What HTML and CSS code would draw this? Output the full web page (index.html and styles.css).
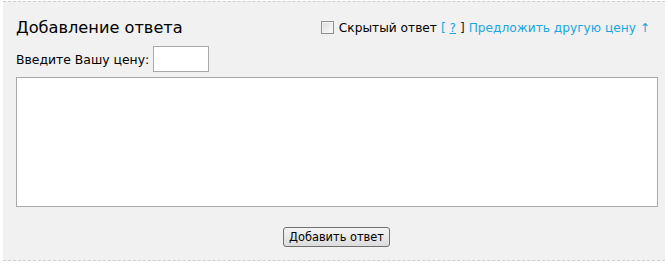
FILE: index.html
```html
<!DOCTYPE html>
<html lang="ru">
<head>
    <meta charset="UTF-8">
    <title>Добавление ответа</title>
    <link rel="stylesheet" href="styles.css">
</head>
<body>
    <div class="answer-box">
        <div class="answer-head">
            <h2>Добавление ответа</h2>
            <div class="answer-options">
                <label class="hidden-answer"><input type="checkbox"> Скрытый ответ</label>
                <span class="hint"><span class="bracket">[</span> <a href="#">?</a> ]</span>
                <a href="#" class="other-price">Предложить другую цену ↑</a>
            </div>
        </div>
        <div class="price-row">
            <label for="price">Введите Вашу цену:</label>
            <input type="text" id="price" class="price-input">
        </div>
        <textarea class="answer-text"></textarea>
        <div class="submit-row">
            <button class="submit-button">Добавить ответ</button>
        </div>
    </div>
</body>
</html>
```

FILE: styles.css
```css
body {
    margin: 0;
    padding: 0;
    background-color: #fff;
    font-family: "DejaVu Sans", Verdana, sans-serif;
    font-size: 12.4px;
    color: #000;
}

.answer-box {
    margin: 1px 0 0 3px;
    height: 260px;
    box-sizing: border-box;
    background-color: #f1f1f1;
    border-top: 1px dashed #cfcfcf;
    border-bottom: 1px dashed #cfcfcf;
    padding: 0 8px 0 13px;
}

.answer-head {
    display: flex;
    justify-content: space-between;
    align-items: center;
    height: 40px;
    padding-top: 11px;
    box-sizing: border-box;
}

.answer-head h2 {
    margin: 0;
    font-size: 16.2px;
    font-weight: normal;
}

.answer-options {
    display: flex;
    align-items: center;
    gap: 4px;
    padding-right: 7px;
    font-size: 12.2px;
}

.hidden-answer {
    display: flex;
    align-items: center;
    gap: 5px;
}

.hidden-answer input {
    appearance: none;
    margin: 0;
    width: 13px;
    height: 13px;
    box-sizing: border-box;
    border: 1px solid #8e8f8f;
    background: linear-gradient(135deg, #dcdcdc, #fbfbfb);
    box-shadow: inset 0 0 0 1px #f4f4f4;
}

.hint {
    color: #222;
}

.hint .bracket,
.hint a {
    color: #1aa6de;
}

.other-price {
    color: #1aa6de;
    text-decoration: none;
}

.price-row {
    display: flex;
    align-items: center;
    gap: 4px;
    margin-top: 4px;
}

.price-input {
    width: 56px;
    height: 26px;
    box-sizing: border-box;
    border: 1px solid #a9a9a9;
    background: #fff;
    margin: 0;
}

.answer-text {
    display: block;
    width: 642px;
    height: 130px;
    box-sizing: border-box;
    margin-top: 5px;
    border: 1px solid #a9a9a9;
    resize: none;
}

.submit-row {
    display: flex;
    justify-content: center;
    margin-top: 20px;
}

.submit-button {
    font-family: "DejaVu Sans", Verdana, sans-serif;
    font-size: 11.4px;
    padding: 1px 5px;
    height: 20px;
    border: 1px solid #707070;
    border-radius: 3px;
    background: linear-gradient(#f4f4f4, #dcdcdc);
    color: #000;
}
```
